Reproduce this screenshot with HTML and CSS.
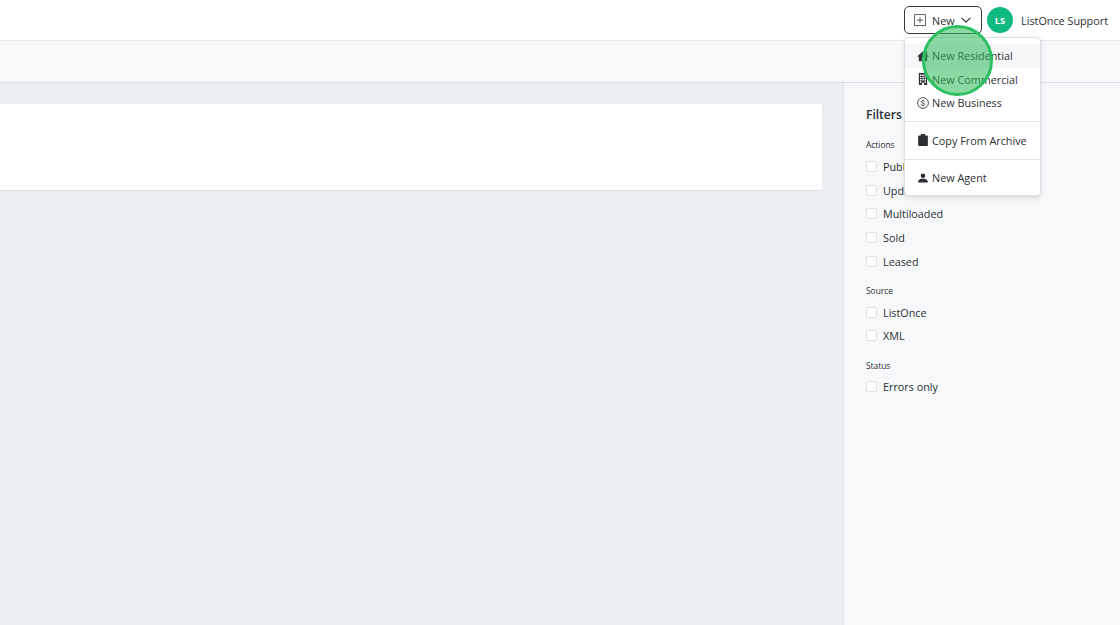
FILE: index.html

```html
<!DOCTYPE html>
<html lang="en">
<head>
    <meta charset="UTF-8">
    <title>Listings</title>
    <link rel="stylesheet" href="styles.css">
</head>
<body>
<header class="topbar">
    <div class="new-wrap">
        <button class="new-button">
            <svg class="new-icon" viewBox="0 0 16 16" width="12" height="12" fill="currentColor"><path d="M14 1a1 1 0 0 1 1 1v12a1 1 0 0 1-1 1H2a1 1 0 0 1-1-1V2a1 1 0 0 1 1-1h12zM2 0a2 2 0 0 0-2 2v12a2 2 0 0 0 2 2h12a2 2 0 0 0 2-2V2a2 2 0 0 0-2-2H2z"/><path d="M8 4a.5.5 0 0 1 .5.5v3h3a.5.5 0 0 1 0 1h-3v3a.5.5 0 0 1-1 0v-3h-3a.5.5 0 0 1 0-1h3v-3A.5.5 0 0 1 8 4z"/></svg>
            <span>New</span>
            <svg class="chevron" viewBox="0 0 16 16" width="10" height="10" fill="none" stroke="currentColor" stroke-width="1.8" stroke-linecap="round" stroke-linejoin="round"><path d="M1.500 5l6.500 6.500 6.500-6.500"/></svg>
        </button>
        <div class="menu">
            <a class="menu-item active">
                <svg viewBox="0 0 16 16" fill="currentColor"><path d="M8 1.500L0.500 8.300 1.400 9.200 2.500 8.200V15h4v-4h3v4h4V8.200l1.100 1 .9-.9-2-1.800V2h-2v2.200z"/></svg>
                New Residential
            </a>
            <a class="menu-item">
                <svg viewBox="0 0 16 16" fill="currentColor"><path fill-rule="evenodd" d="M2.500 0h11v16H9.500v-3h-3v3H2.500zM4 2v2h2V2zm3 0v2h2V2zm3 0v2h2V2zM4 5v2h2V5zm3 0v2h2V5zm3 0v2h2V5zM4 8v2h2V8zm3 0v2h2V8zm3 0v2h2V8zM4 11v2h2v-2zm6 0v2h2v-2z"/></svg>
                New Commercial
            </a>
            <a class="menu-item">
                <svg viewBox="0 0 16 16" fill="none" stroke="currentColor"><circle cx="8" cy="8" r="7.200" stroke-width="1.100"/><path d="M10.200 6.100C9.900 5.200 9.100 4.800 8 4.800c-1.200 0-2.100.6-2.100 1.500 0 2.100 4.300 1.100 4.300 3.300 0 1-1 1.600-2.200 1.600-1.100 0-2-.5-2.300-1.400M8 3.800v1M8 11.200v1" stroke-width="1.200"/></svg>
                New Business
            </a>
            <div class="menu-divider"></div>
            <a class="menu-item">
                <svg viewBox="0 0 16 16" fill="currentColor"><path d="M6 0h4a1 1 0 0 1 1 1v1h2a1.500 1.500 0 0 1 1.500 1.500v11A1.500 1.500 0 0 1 13 16H3a1.500 1.500 0 0 1-1.500-1.500v-11A1.500 1.500 0 0 1 3 2h2V1a1 1 0 0 1 1-1z"/></svg>
                Copy From Archive
            </a>
            <div class="menu-divider"></div>
            <a class="menu-item">
                <svg viewBox="0 0 16 16" fill="currentColor"><path d="M2.500 14s-1 0-1-1 1-4 6.500-4 6.500 3 6.500 4-1 1-1 1H2.500zM8 8a3 3 0 1 0 0-6 3 3 0 0 0 0 6z"/></svg>
                New Agent
            </a>
        </div>
        <div class="click-ring"></div>
    </div>
    <div class="avatar">LS</div>
    <span class="user-name">ListOnce Support</span>
</header>
<div class="subbar"></div>
<div class="page">
    <main class="content">
        <div class="card"></div>
    </main>
    <aside class="filters">
        <h2>Filters</h2>
        <h3>Actions</h3>
        <label class="check"><span class="box"></span>Published</label>
        <label class="check"><span class="box"></span>Updated</label>
        <label class="check"><span class="box"></span>Multiloaded</label>
        <label class="check"><span class="box"></span>Sold</label>
        <label class="check"><span class="box"></span>Leased</label>
        <h3>Source</h3>
        <label class="check"><span class="box"></span>ListOnce</label>
        <label class="check"><span class="box"></span>XML</label>
        <h3>Status</h3>
        <label class="check"><span class="box"></span>Errors only</label>
    </aside>
</div>
</body>
</html>
```

FILE: styles.css

```css
* {
    box-sizing: border-box;
}

html, body {
    height: 100%;
}

body {
    margin: 0;
    overflow: hidden;
    display: flex;
    flex-direction: column;
    font-family: "Open Sans", "Noto Sans", Arial, sans-serif;
    font-size: 10.8px;
    color: #2b2f33;
    background-color: #eaeef2;
}

.topbar {
    height: 41px;
    flex: none;
    display: flex;
    align-items: center;
    justify-content: flex-end;
    padding: 0 12px 0 0;
    background-color: #fff;
    border-bottom: 1px solid #e6e8eb;
}

.new-wrap {
    position: relative;
    margin-right: 5px;
}

.new-button {
    width: 78px;
    height: 28px;
    display: flex;
    align-items: center;
    padding: 0 0 0 9px;
    background-color: #fff;
    color: #2b2f33;
    border: 1px solid #343a40;
    border-radius: 5px;
    font: inherit;
}

.new-button span {
    margin-left: 6px;
}

.chevron {
    margin-left: 6px;
}

.avatar {
    width: 26px;
    height: 26px;
    display: flex;
    align-items: center;
    justify-content: center;
    border-radius: 50%;
    background-color: #10b981;
    color: #fff;
    font-size: 9.500px;
    font-weight: 700;
}

.user-name {
    margin-left: 8px;
}

.menu {
    position: absolute;
    top: 31px;
    left: 0;
    width: 137px;
    height: 159px;
    padding: 6px 0;
    background-color: #fff;
    border: 1px solid #dcdfe3;
    border-radius: 4px;
    box-shadow: 0 2px 5px rgba(0, 0, 0, 0.12);
    z-index: 2;
}

.menu-item {
    display: flex;
    align-items: center;
    gap: 3px;
    height: 23.500px;
    padding-left: 12px;
    white-space: nowrap;
}

.menu-item svg {
    width: 12px;
    height: 12px;
    flex: none;
}

.menu-item.active {
    background-color: #f6f7f8;
}

.menu-divider {
    height: 1px;
    margin: 6.500px 0;
    background-color: #dfe2e6;
}

.click-ring {
    position: absolute;
    top: 19px;
    left: 18px;
    width: 71px;
    height: 71px;
    border: 3px solid #2cc063;
    border-radius: 50%;
    background-color: rgba(44, 186, 88, 0.55);
    z-index: 3;
}

.subbar {
    height: 42px;
    flex: none;
    background-color: #f7f8fa;
    border-bottom: 1px solid #dcdfe3;
}

.page {
    flex: 1;
    display: flex;
    min-height: 0;
}

.content {
    flex: 1;
    padding: 21px 21px 0 0;
}

.card {
    height: 87px;
    background-color: #fff;
    border-bottom: 1px solid #dcdfe3;
    border-radius: 0 3px 3px 0;
}

.filters {
    width: 277px;
    flex: none;
    padding: 23px 0 0 22px;
    background-color: #f7f8fa;
    border-left: 1px solid #dfe3e8;
}

.filters h2 {
    margin: 0 0 14px;
    font-size: 12px;
    line-height: 18px;
    font-weight: 600;
}

.filters h3 {
    margin: 0 0 3px;
    font-size: 8.400px;
    line-height: 14px;
    font-weight: 400;
}

.check {
    display: flex;
    align-items: center;
    height: 23.600px;
    white-space: nowrap;
}

.check + h3 {
    margin-top: 11px;
    margin-bottom: 2.500px;
}

.box {
    width: 11px;
    height: 11px;
    margin-right: 6px;
    background-color: #fff;
    border: 1px solid #dee2e6;
    border-radius: 2px;
}
```
